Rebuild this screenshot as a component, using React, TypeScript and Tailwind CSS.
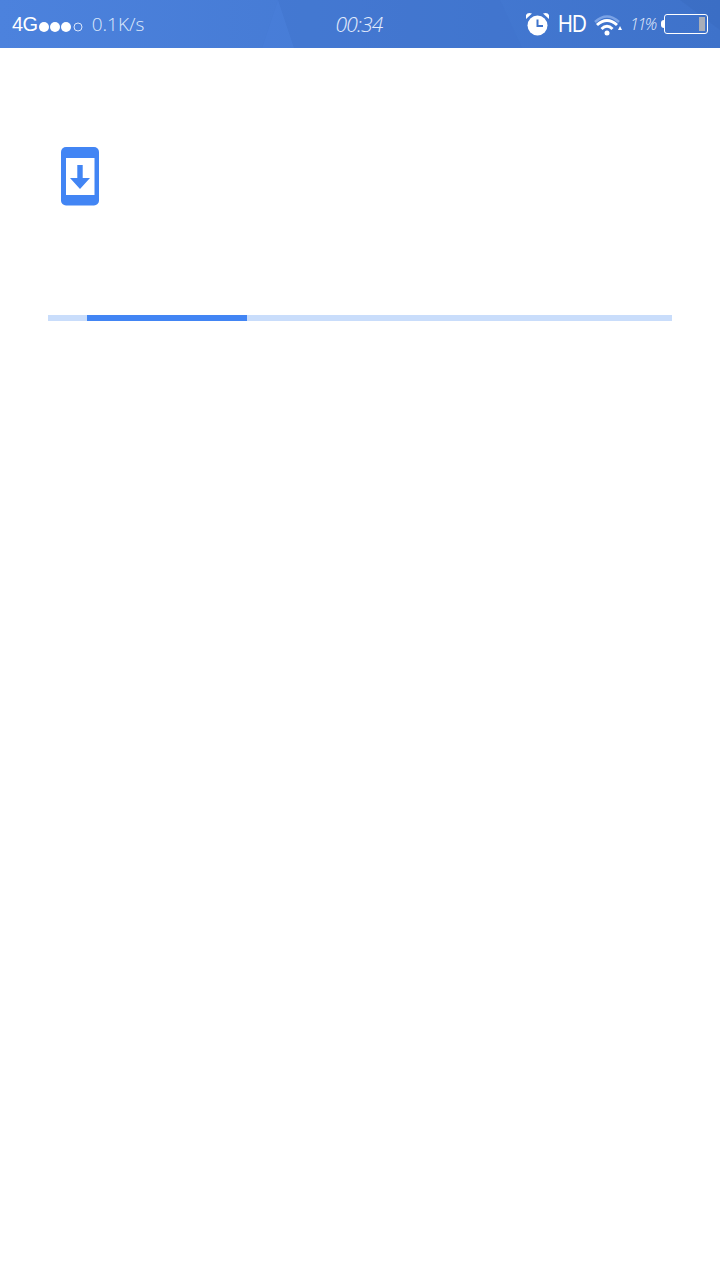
export default function App() {
  return (
    <div className="min-h-[1280px] w-[720px] bg-white font-['Liberation_Sans',sans-serif]">
      <div className="relative flex h-12 items-center overflow-hidden bg-gradient-to-r from-[#4c82dd] to-[#3e72ca] text-white">
        <svg className="absolute inset-0" width="720" height="48" viewBox="0 0 720 48">
          <polygon points="262,48 278,0 500,0 522,48" fill="#3f74cc" opacity="0.35" />
          <polygon points="278,0 294,48 262,48" fill="#4c82dd" opacity="0.5" />
          <polygon points="680,0 720,0 720,30" fill="#3a6cc2" opacity="0.6" />
        </svg>
        <div className="relative flex h-12 w-[720px] items-center">
          <div className="flex w-[240px] items-center pl-3">
            <span className="text-[20px] leading-none tracking-[-0.5px]">4G</span>
            <svg className="mt-[6px]" width="46" height="12" viewBox="0 0 46 12">
              <circle cx="6" cy="6" r="5" fill="#fff" />
              <circle cx="17" cy="6" r="5" fill="#fff" />
              <circle cx="28" cy="6" r="5" fill="#fff" />
              <circle cx="40" cy="6" r="4" fill="none" stroke="#dbe7fb" strokeWidth="1" />
            </svg>
            <span className="ml-[8px] font-['Open_Sans',sans-serif] text-[19px] font-light leading-none text-[#dce8fb]">
              0.1K/s
            </span>
          </div>
          <div className="flex w-[240px] justify-center">
            <span className="mr-[2px] font-['Open_Sans',sans-serif] text-[21px] font-light italic leading-none tracking-[-0.8px] text-[#e3ecfc]">
              00:34
            </span>
          </div>
          <div className="flex flex-1 items-center pl-[45px]">
            <svg width="25" height="25" viewBox="0 0 25 25">
              <circle cx="12.5" cy="13.5" r="10" fill="#fff" />
              <path d="M12.5 7.5V14H18" fill="none" stroke="#3f74cc" strokeWidth="2" />
              <path d="M1 7 L7 1.5 Q2.5 0 1 3 Z M24 7 L18 1.5 Q22.5 0 24 3 Z" fill="#fff" />
            </svg>
            <span className="ml-[8px] w-[28px] origin-left whitespace-nowrap text-[24px] leading-none tracking-[-1px] [transform:scaleX(0.85)]">
              HD
            </span>
            <svg className="ml-[8px] mt-[1px]" width="30" height="24" viewBox="0 0 30 24">
              <path d="M1 9 Q13 -2 25 9" fill="none" stroke="#7ba3e6" strokeWidth="2.5" />
              <path d="M3 12 Q13 3 23 12" fill="none" stroke="#fff" strokeWidth="3" />
              <path d="M7.5 16 Q13 10.5 18.5 16" fill="none" stroke="#fff" strokeWidth="3" />
              <circle cx="13" cy="20" r="2.5" fill="#fff" />
              <polygon points="24,17 28,17 26,13" fill="#fff" />
            </svg>
            <span className="ml-[6px] font-['Open_Sans',sans-serif] text-[16px] font-light italic leading-none tracking-[-1.4px] text-[#e3ecfc]">
              11%
            </span>
            <div className="ml-[5px] h-[8px] w-[3px] rounded-l-full bg-white" />
            <div className="flex h-[20px] w-[44px] items-center justify-end rounded-[3px] border border-white pr-[2px]">
              <div className="h-[14px] w-[6px] bg-[#a9aeb8]" />
            </div>
          </div>
        </div>
      </div>
      <div className="px-12">
        <div className="pl-[13px] pt-[99px]">
          <svg className="block" width="38" height="59" viewBox="0 0 38 59">
            <rect x="0" y="0" width="38" height="58.5" rx="5" fill="#4285f4" />
            <rect x="5" y="11" width="28.5" height="37" fill="#fff" />
            <path d="M16.3 18H21.7V31H29L19 42L9 31H16.3Z" fill="#4285f4" />
          </svg>
        </div>
        <div className="mt-[109px] h-[6px] w-[624px] bg-[#c9ddfb] pl-[39px]">
          <div className="h-[6px] w-[160px] bg-[#4285f4]" />
        </div>
      </div>
    </div>
  );
}
